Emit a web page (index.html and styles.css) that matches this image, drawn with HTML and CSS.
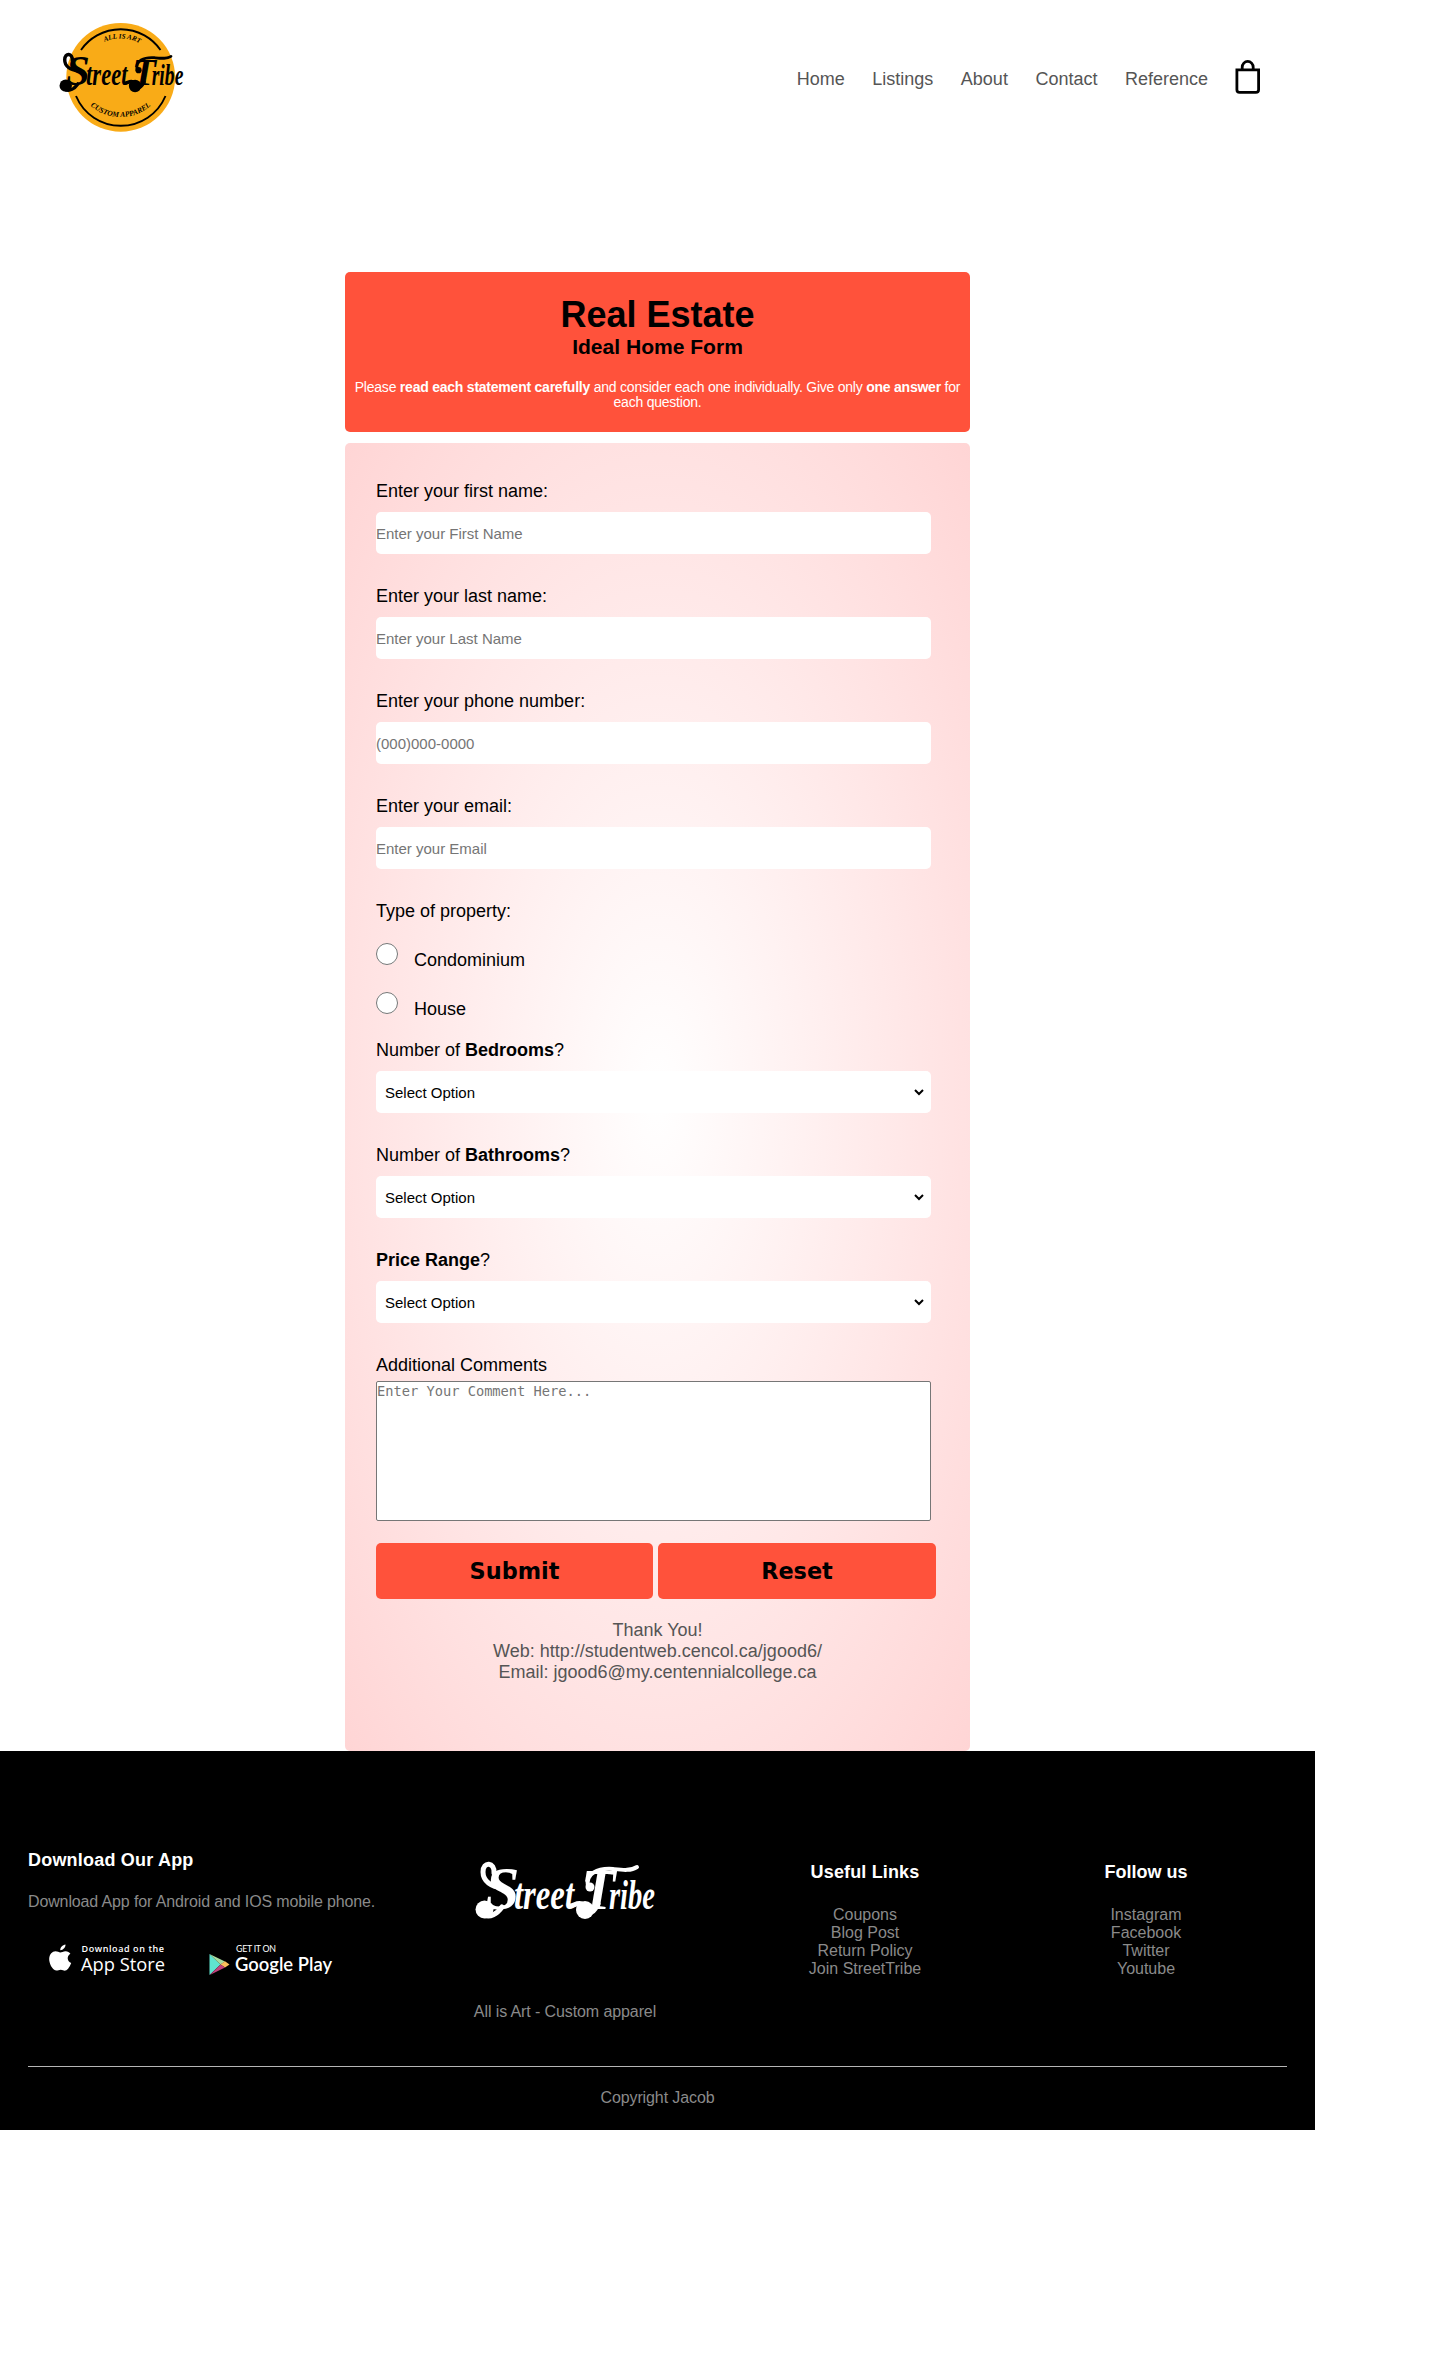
FILE: index.html
```html
<!DOCTYPE html>
<html lang="en">
<head>
<meta charset="utf-8">
<title>Real Estate - Ideal Home Form</title>
<link rel="stylesheet" href="styles.css">
</head>
<body>
<header class="header">
  <svg class="logo" viewBox="57 20 130 112" role="img" aria-label="StreetTribe">
    <circle cx="120.7" cy="77.3" r="54.4" fill="#f9ab17"/>
    <path d="M81 50A48.5 48.5 0 0 1 160.500 50M76 96A48.500 48.500 0 0 0 165.500 96" fill="none" stroke="#000" stroke-width="1.900"/>
    <path id="arc-top" d="M85 60A40 40 0 0 1 156 60" fill="none"/>
    <path id="arc-bottom" d="M77 86A46 46 0 0 0 164 86" fill="none"/>
    <g font-family="'Liberation Serif', serif" font-weight="bold" font-style="italic" font-size="7" text-anchor="middle">
      <text><textPath href="#arc-top" startOffset="52%">ALL IS ART</textPath></text>
      <text font-size="7.500"><textPath href="#arc-bottom" startOffset="50%">CUSTOM APPAREL</textPath></text>
    </g>
    <use href="#wordmark" transform="translate(58.500 51.500) scale(.69)"/>
  </svg>
  <nav class="nav">
    <a>Home</a><a>Listings</a><a>About</a><a>Contact</a><a>Reference</a>
    <svg class="bag" viewBox="0 0 26 34" fill="none" stroke="#000" stroke-width="2.800"><path d="M1.900 9.900h21.700v19.800q0 2.700-2.700 2.700H4.600q-2.700 0-2.700-2.700z"/><path d="M7.200 9V7.200a5.500 5.800 0 0 1 11 0V9"/></svg>
  </nav>
</header>

<main class="main">
  <section class="banner">
    <h1>Real Estate</h1>
    <h3>Ideal Home Form</h3>
    <p>Please <b>read each statement carefully</b> and consider each one individually. Give only <b>one answer</b> for each question.</p>
  </section>
  <form class="form">
    <div class="field"><label>Enter your first name:</label><input type="text" placeholder="Enter your First Name"></div>
    <div class="field"><label>Enter your last name:</label><input type="text" placeholder="Enter your Last Name"></div>
    <div class="field"><label>Enter your phone number:</label><input type="text" placeholder="(000)000-0000"></div>
    <div class="field"><label>Enter your email:</label><input type="text" placeholder="Enter your Email"></div>
    <div class="options">
      <label>Type of property:</label>
      <div class="option"><input type="radio" name="type"><span>Condominium</span></div>
      <div class="option"><input type="radio" name="type"><span>House</span></div>
    </div>
    <div class="field"><label>Number of <b>Bedrooms</b>?</label><select><option>Select Option</option></select></div>
    <div class="field"><label>Number of <b>Bathrooms</b>?</label><select><option>Select Option</option></select></div>
    <div class="field"><label><b>Price Range</b>?</label><select><option>Select Option</option></select></div>
    <div class="comments"><label>Additional Comments</label><textarea placeholder="Enter Your Comment Here..."></textarea></div>
    <div class="buttons"><button type="submit">Submit</button><button type="reset">Reset</button></div>
    <p class="thanks">Thank You!<br>Web: http://studentweb.cencol.ca/jgood6/<br>Email: jgood6@my.centennialcollege.ca</p>
  </form>
</main>

<footer class="footer">
  <div class="columns">
    <div class="col-app">
      <h3>Download Our App</h3>
      <p>Download App for Android and IOS mobile phone.</p>
      <div class="badges">
        <svg width="120" height="34" viewBox="47 1942 120 34" fill="#fff">
          <path d="M65.500 1944.500c.2 2.700-2.200 5.600-5.200 5.700-.3-2.700 2.300-5.400 5.200-5.700zM70.400 1953.800c-4 2.400-3.300 7.700.8 9.200-1 2.700-3.200 7.100-5.700 7.600-1.800.3-2.700-.9-4.700-.9s-3 1.100-4.700.9c-4-.6-7.200-7.700-6.900-12 .3-4.600 3.100-7.200 6.300-7.300 2 0 3.600 1.200 4.800 1.200 1.300 0 3.200-1.400 5.400-1.300 2 .1 3.600 1 4.700 2.600z"/>
          <text x="81.500" y="1951.500" font-family="Open Sans, sans-serif" font-weight="600" font-size="9" textLength="82.500">Download on the</text>
          <text x="81" y="1971" font-family="Open Sans, sans-serif" font-weight="500" font-size="18.500" textLength="84" lengthAdjust="spacingAndGlyphs">App Store</text>
        </svg>
        <svg width="126" height="34" viewBox="208 1942 126 34" fill="#fff">
          <path fill="#5fe3cf" d="M209.500 1954v21l11-10.500z"/><path fill="#a9dca0" d="M209.500 1954l15.500 7.500-4.500 3z"/><path fill="#fbbf5c" d="M225 1961.300l4.500 3.200-4.500 3-4.500-3z"/><path fill="#c2417c" d="M209.800 1975l10.700-10.500 4.500 3z"/>
          <text x="236" y="1952" font-family="Lato, sans-serif" font-size="8.800" textLength="40">GET IT ON</text>
          <text x="235" y="1971" font-family="Lato, sans-serif" font-weight="600" font-size="19.500" textLength="97" lengthAdjust="spacingAndGlyphs">Google Play</text>
        </svg>
      </div>
    </div>
    <div class="col-brand">
      <svg class="brand" viewBox="0 0 182 60" role="img" aria-label="StreetTribe">
        <g id="wordmark">
          <text y="49" font-family="'Liberation Serif', serif" font-weight="bold" font-style="italic" fill="currentColor"><tspan x="11" font-size="62">S</tspan><tspan x="40" font-size="45" textLength="60" lengthAdjust="spacingAndGlyphs">treet</tspan><tspan x="107" font-size="56">T</tspan><tspan x="135" font-size="42" textLength="46" lengthAdjust="spacingAndGlyphs">ribe</tspan></text>
          <g fill="none" stroke="currentColor" stroke-linecap="round">
            <path stroke-width="5" d="M20 13C21 2 9 1 9 12c0 9 8 15 20 16"/>
            <path stroke-width="5" d="M10 55c6 3 13-1 18-8M96 46c4 0 7-4 12-2"/>
            <path stroke-width="5" d="M112 53c6 1 9-3 12-9"/>
            <path stroke-width="4" d="M114 27c-3-14 10-19 25-18 10 1 18 2 24-2"/>
          </g>
          <g fill="currentColor"><circle cx="10.500" cy="49.500" r="9"/><circle cx="111" cy="50" r="9"/><circle cx="116" cy="27" r="4.500"/></g>
        </g>
      </svg>
      <p>All is Art - Custom apparel</p>
    </div>
    <div class="col-links">
      <h3>Useful Links</h3>
      <ul><li>Coupons</li><li>Blog Post</li><li>Return Policy</li><li>Join StreetTribe</li></ul>
    </div>
    <div class="col-follow">
      <h3>Follow us</h3>
      <ul><li>Instagram</li><li>Facebook</li><li>Twitter</li><li>Youtube</li></ul>
    </div>
  </div>
  <hr>
  <p class="copyright">Copyright Jacob</p>
</footer>
</body>
</html>
```
FILE: styles.css
```css
* { margin: 0; padding: 0; box-sizing: border-box; }
body {
  width: 1315px;
  background: #fff;
  font-family: "Liberation Sans", Arial, sans-serif;
  font-size: 18px;
  line-height: 21px;
  color: #000;
}

.header { display: flex; justify-content: space-between; height: 272px; padding: 20px 54.5px 0 57px; }
.logo { width: 130px; height: 112px; overflow: visible; color: #000; }
.nav { display: flex; gap: 27.5px; align-items: flex-start; padding-top: 49px; color: #555; }
.bag { width: 26px; height: 34px; margin: -9px 0 0 -1px; }

.main { width: 625px; margin-left: 345px; }
.banner { height: 160px; padding: 22px 5px 0; border-radius: 5px; background: #ff523b; text-align: center; }
.banner h1 { font-size: 36px; line-height: 41px; }
.banner h3 { font-size: 21.06px; line-height: 24px; }
.banner p { margin-top: 21px; font-size: 14px; line-height: 15px; letter-spacing: -0.23px; color: #fff; }

.form {
  height: 1308px;
  margin-top: 11px;
  padding: 38px 31px 0;
  border-radius: 5px;
  background: radial-gradient(#fff, #ffd5d5);
}
.form label { display: block; }
.field { margin-bottom: 32px; }
.field input, .field select {
  display: block;
  width: 555px;
  height: 42px;
  margin-top: 10px;
  border: 0;
  border-radius: 5px;
  background-color: #fff;
  font: 15px "Liberation Sans", Arial, sans-serif;
  color: #000;
}
.field select { padding: 0 1px 0 5px; border-right: 4px solid #fff; }
::placeholder { color: #757575; }
.options label { margin-bottom: 21px; }
.option { display: flex; height: 27px; margin-bottom: 22px; }
.option:last-child { margin-bottom: 21px; }
.option input { width: 22px; height: 22px; margin-right: 16px; }
.option span { margin-top: 7px; }
.comments textarea {
  display: block;
  width: 555px;
  height: 140px;
  margin-top: 5px;
  padding: 1px 0;
  border: 1px solid #767676;
  border-radius: 2px;
  resize: none;
  font: 13.7px "DejaVu Sans Mono", monospace;
}
.buttons { display: grid; grid-template-columns: 277px 278px; gap: 5px; margin-top: 22px; }
.buttons button {
  height: 56px;
  border: 0;
  border-radius: 5px;
  background: #ff523b;
  font: bold 22.4px "DejaVu Sans", Verdana, sans-serif;
  color: #000;
}
.thanks { margin-top: 21px; text-align: center; color: #555; }

.footer { height: 379px; padding: 99px 28px 0; background: #000; color: #8a8a8a; font-size: 16px; line-height: 18px; }
.footer h3 { font-size: 18px; line-height: 21px; color: #fff; }
.columns { display: grid; grid-template-columns: 403px 268px 332px 230px; height: 216px; }
.col-app h3 { letter-spacing: 0.2px; }
.col-app p { margin-top: 22px; letter-spacing: -0.13px; }
.badges { display: flex; gap: 41px; margin: 31px 0 0 19px; }
.badges svg { overflow: visible; }
.col-brand { padding-top: 10px; text-align: center; }
.brand { display: block; width: 182px; height: 60px; margin: 0 auto; overflow: visible; color: #fff; }
.col-brand p { margin-top: 83px; letter-spacing: -0.1px; }
.col-links, .col-follow { padding-top: 12px; text-align: center; }
.col-links h3 { letter-spacing: 0.15px; }
.footer ul { margin-top: 23px; list-style: none; }
.footer hr { height: 1px; border: 0; background: #b5b5b5; }
.copyright { margin-top: 22px; text-align: center; letter-spacing: -0.1px; }
```
